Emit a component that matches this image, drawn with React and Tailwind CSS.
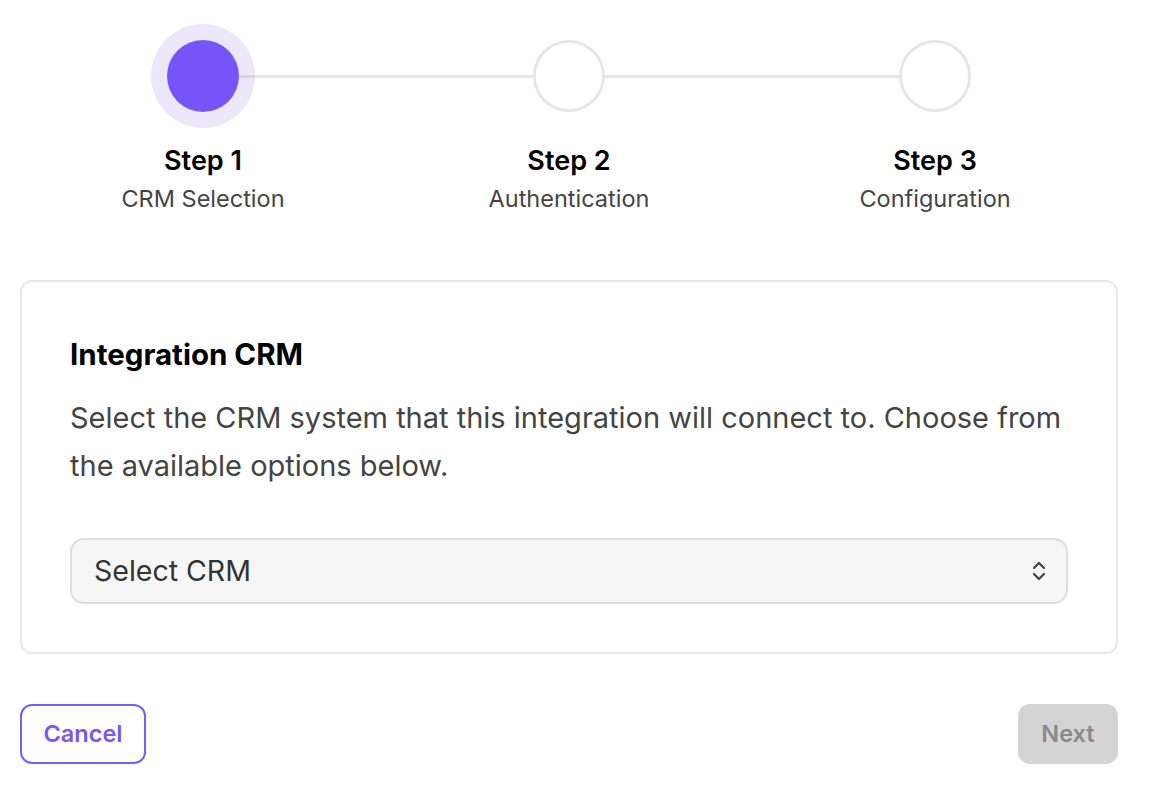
import React from "react";

function Chevrons() {
  return (
    <svg width="18" height="22" viewBox="0 0 18 22" fill="none" stroke="#444" strokeWidth="2.2" strokeLinecap="round" strokeLinejoin="round">
      <path d="M4 8 L9 3 L14 8" />
      <path d="M4 14 L9 19 L14 14" />
    </svg>
  );
}

export default function App() {
  const steps = [
    ["Step 1", "CRM Selection"],
    ["Step 2", "Authentication"],
    ["Step 3", "Configuration"],
  ];
  return (
    <div className="w-[1152px] min-h-[809px] bg-white" style={{ fontFamily: "Inter, 'Noto Sans', sans-serif" }}>
      <div className="pl-[20px] pr-[34px] pt-[40px]">
        <div className="flex items-center px-[147px]">
          <div className="relative z-10 w-[72px] h-[72px] rounded-full bg-[#7655f8] shadow-[0_0_0_16px_rgba(120,90,210,0.15)]" />
          <div className="flex-1 h-[3px] bg-[#e6e6e6]" />
          <div className="w-[72px] h-[72px] rounded-full border-[3px] border-[#e6e6e6] bg-white" />
          <div className="flex-1 h-[3px] bg-[#e6e6e6]" />
          <div className="w-[72px] h-[72px] rounded-full border-[3px] border-[#e6e6e6] bg-white" />
        </div>
        <div className="grid grid-cols-3 text-center mt-[33px]">
          {steps.map(([a, b]) => (
            <div key={a}>
              <div className="text-[27px] leading-[32px] font-semibold text-black">{a}</div>
              <div className="text-[23.5px] leading-[28px] mt-[8px] text-[#444]">{b}</div>
            </div>
          ))}
        </div>
        <div className="mt-[67px] border-2 border-[#e8e8e8] rounded-[12px] pl-[48px] pr-[48px] pt-[54px] pb-[48px]">
          <div className="text-[29.5px] leading-[36px] font-bold text-black">Integration CRM</div>
          <p className="mt-[22px] text-[29px] leading-[48px] text-[#444]">
            Select the CRM system that this integration will connect to. Choose from the available options below.
          </p>
          <div className="mt-[48px] h-[66px] border-2 border-[#dedede] bg-[#f6f6f6] rounded-[14px] flex items-center justify-between pl-[22px] pr-[18px]">
            <span className="text-[28.5px] text-[#333]">Select CRM</span>
            <Chevrons />
          </div>
        </div>
        <div className="mt-[50px] flex justify-between">
          <button className="w-[126px] h-[60px] border-2 border-[#7a5cfa] rounded-[12px] text-[23.5px] font-semibold text-[#7755fa] bg-white">Cancel</button>
          <button className="w-[100px] h-[60px] rounded-[12px] text-[23.5px] font-semibold text-[#8a8a8a] bg-[#d4d4d4]">Next</button>
        </div>
      </div>
    </div>
  );
}
